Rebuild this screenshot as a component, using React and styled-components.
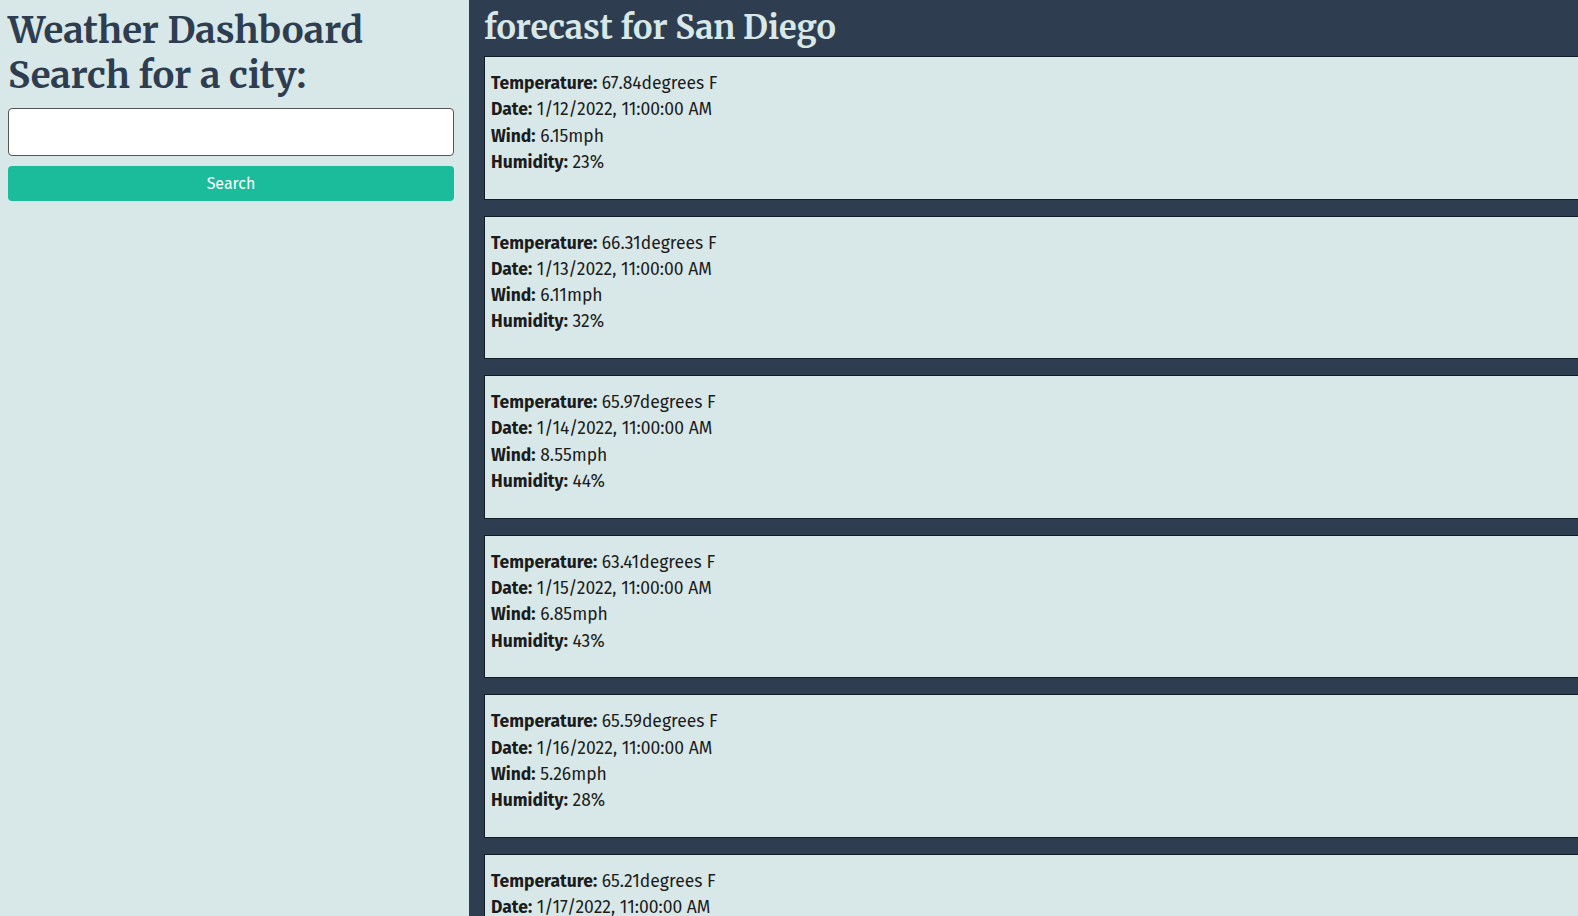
import React from "react";
import styled, { createGlobalStyle } from "styled-components";

const GlobalStyle = createGlobalStyle`
  html, body {
    margin: 0;
    padding: 0;
    background-color: #d8e8e8;
    overflow: hidden;
  }
  * {
    box-sizing: border-box;
  }
`;

const Page = styled.div`
  display: flex;
  height: 100vh;
  width: 100vw;
  overflow: hidden;
  font-family: "Fira Sans", "Noto Sans", sans-serif;
`;

const Sidebar = styled.aside`
  flex: 0 0 469px;
  background-color: #d8e8e8;
  padding: 8px 15px 0 8px;
`;

const Title = styled.h1`
  margin: 0;
  font-family: "Merriweather", "DejaVu Serif", serif;
  font-weight: bold;
  font-size: 36.6px;
  line-height: 45px;
  color: #2e3e50;
`;

const SearchForm = styled.form`
  display: flex;
  flex-direction: column;
  gap: 10px;
  margin-top: 10px;
`;

const Input = styled.input`
  height: 48px;
  width: 100%;
  border: 1px solid #555;
  border-radius: 4px;
  background: #fff;
  font-size: 16px;
  padding: 0 10px;
`;

const Button = styled.button`
  height: 35px;
  width: 100%;
  border: none;
  border-radius: 4px;
  background-color: #1abc9c;
  color: #fff;
  font-family: "Fira Sans", "Noto Sans", sans-serif;
  font-size: 16px;
  cursor: pointer;
`;

const Forecast = styled.main`
  flex: 1;
  min-width: 0;
  background-color: #2e3e50;
  padding-left: 15px;
`;

const CityTitle = styled.h2`
  margin: 0;
  height: 56px;
  font-family: "Merriweather", "DejaVu Serif", serif;
  font-weight: bold;
  font-size: 32.5px;
  line-height: 55px;
  color: #d8e8e8;
`;

const CardList = styled.div`
  display: flex;
  flex-direction: column;
  gap: 16px;
`;

const Card = styled.div`
  flex-shrink: 0;
  width: 1200px;
  height: 143.6px;
  background-color: #d8e8e8;
  border: 1px solid #111c24;
  padding: 14px 6px 0;
  color: #1c1c1c;
  font-size: 17.5px;
  line-height: 26.3px;
`;

const Line = styled.div`
  white-space: nowrap;
`;

const Label = styled.b`
  font-weight: bold;
`;

const days = [
  { temp: "67.84", date: "1/12/2022", wind: "6.15", hum: "23" },
  { temp: "66.31", date: "1/13/2022", wind: "6.11", hum: "32" },
  { temp: "65.97", date: "1/14/2022", wind: "8.55", hum: "44" },
  { temp: "63.41", date: "1/15/2022", wind: "6.85", hum: "43" },
  { temp: "65.59", date: "1/16/2022", wind: "5.26", hum: "28" },
  { temp: "65.21", date: "1/17/2022", wind: "5.80", hum: "30" },
];

const App = () => {
  return (
    <>
      <GlobalStyle />
      <Page>
        <Sidebar>
          <Title>
            Weather Dashboard
            <br />
            Search for a city:
          </Title>
          <SearchForm onSubmit={(e) => e.preventDefault()}>
            <Input type="text" />
            <Button type="submit">Search</Button>
          </SearchForm>
        </Sidebar>
        <Forecast>
          <CityTitle>forecast for San Diego</CityTitle>
          <CardList>
            {days.map((d) => (
              <Card key={d.date}>
                <Line>
                  <Label>Temperature:</Label> {d.temp}degrees F
                </Line>
                <Line>
                  <Label>Date:</Label> {d.date}, 11:00:00 AM
                </Line>
                <Line>
                  <Label>Wind:</Label> {d.wind}mph
                </Line>
                <Line>
                  <Label>Humidity:</Label> {d.hum}%
                </Line>
              </Card>
            ))}
          </CardList>
        </Forecast>
      </Page>
    </>
  );
};

export default App;
